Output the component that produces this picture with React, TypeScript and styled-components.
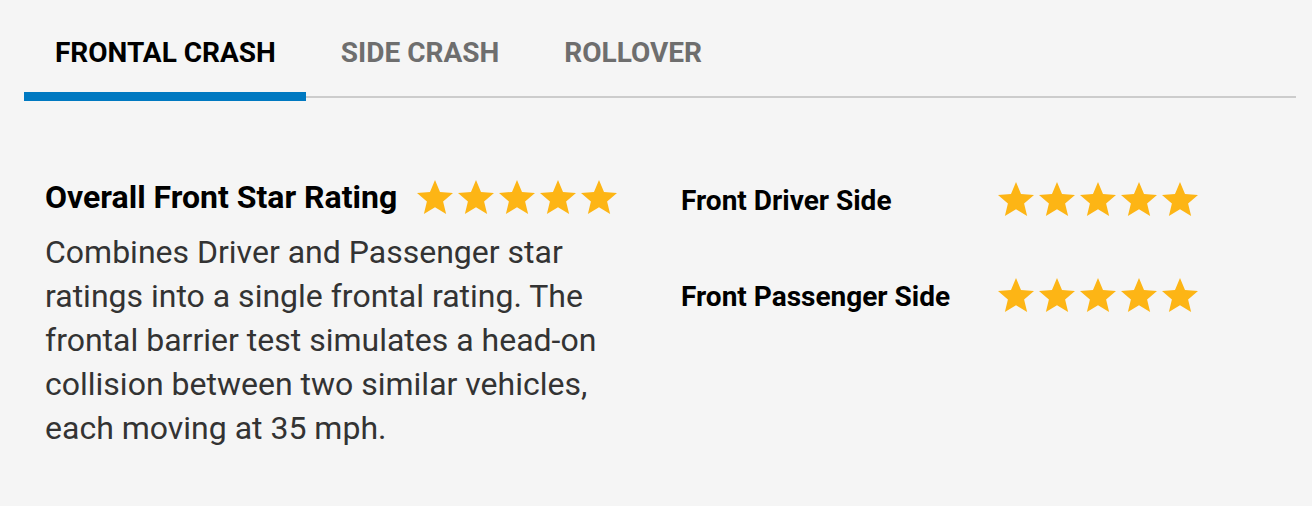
import React from "react";
import styled, { createGlobalStyle } from "styled-components";

const GlobalStyle = createGlobalStyle`
  html, body {
    margin: 0;
    padding: 0;
    background: #f5f5f5;
  }
  body {
    font-family: Roboto, "Noto Sans", "Liberation Sans", sans-serif;
    color: #222;
  }
`;

const Page = styled.div`
  padding: 0 16px 0 24px;
  background: #f5f5f5;
  min-height: 506px;
  box-sizing: border-box;
`;

const TabBar = styled.nav`
  display: flex;
  gap: 4px;
  border-bottom: 2px solid #cccccc;
`;

const Tab = styled.button<{ $active?: boolean }>`
  appearance: none;
  background: none;
  border: none;
  border-bottom: 9px solid ${(p) => (p.$active ? "#0079c1" : "transparent")};
  margin: 0 0 -5px;
  padding: 36px 30px 23px 31px;
  font-family: Roboto, "Liberation Sans", sans-serif;
  font-weight: 700;
  font-size: 28px;
  line-height: 33px;
  text-transform: uppercase;
  color: ${(p) => (p.$active ? "#000" : "#6e6e6e")};
  cursor: pointer;
`;

const Content = styled.section`
  display: grid;
  grid-template-columns: 580px 1fr;
  column-gap: 56px;
  padding: 81px 0 0 21px;
`;

const Summary = styled.div`
  display: flex;
  flex-direction: column;
`;

const HeadingRow = styled.div`
  display: flex;
  align-items: center;
  gap: 20px;
  height: 36px;
`;

const Heading = styled.h2`
  margin: 0;
  font-size: 32px;
  font-weight: 700;
  color: #000;
  line-height: 36px;
`;

const Description = styled.p`
  margin: 15px 0 0;
  font-size: 32px;
  font-weight: 400;
  line-height: 44px;
  color: #333;
`;

const Ratings = styled.div`
  display: flex;
  flex-direction: column;
  gap: 60px;
  padding-top: 2px;
`;

const RatingRow = styled.div`
  display: grid;
  grid-template-columns: 317px auto;
  align-items: center;
  height: 36px;
`;

const Label = styled.span`
  font-size: 28px;
  font-weight: 700;
  line-height: 32px;
  padding-top: 3px;
  color: #000;
`;

const Stars = styled.div`
  display: flex;
  gap: 5px;
`;

const StarSvg = styled.svg`
  width: 36px;
  height: 34px;
  display: block;
  fill: #fdb515;
`;

const Star = () => (
  <StarSvg viewBox="-0.951 -1 1.902 1.809" preserveAspectRatio="none">
    <polygon points="0,-1 0.2645,-0.364 0.951,-0.309 0.428,0.139 0.588,0.809 0,0.45 -0.588,0.809 -0.428,0.139 -0.951,-0.309 -0.2645,-0.364" />
  </StarSvg>
);

const FiveStars = () => (
  <Stars aria-label="5 stars">
    {[0, 1, 2, 3, 4].map((i) => (
      <Star key={i} />
    ))}
  </Stars>
);

export default function App() {
  return (
    <Page>
      <GlobalStyle />
      <TabBar>
        <Tab $active>Frontal Crash</Tab>
        <Tab>Side Crash</Tab>
        <Tab>Rollover</Tab>
      </TabBar>
      <Content>
        <Summary>
          <HeadingRow>
            <Heading>Overall Front Star Rating</Heading>
            <FiveStars />
          </HeadingRow>
          <Description>
            Combines Driver and Passenger star ratings into a single frontal
            rating. The frontal barrier test simulates a head-on collision
            between two similar vehicles, each moving at 35 mph.
          </Description>
        </Summary>
        <Ratings>
          <RatingRow>
            <Label>Front Driver Side</Label>
            <FiveStars />
          </RatingRow>
          <RatingRow>
            <Label>Front Passenger Side</Label>
            <FiveStars />
          </RatingRow>
        </Ratings>
      </Content>
    </Page>
  );
}
